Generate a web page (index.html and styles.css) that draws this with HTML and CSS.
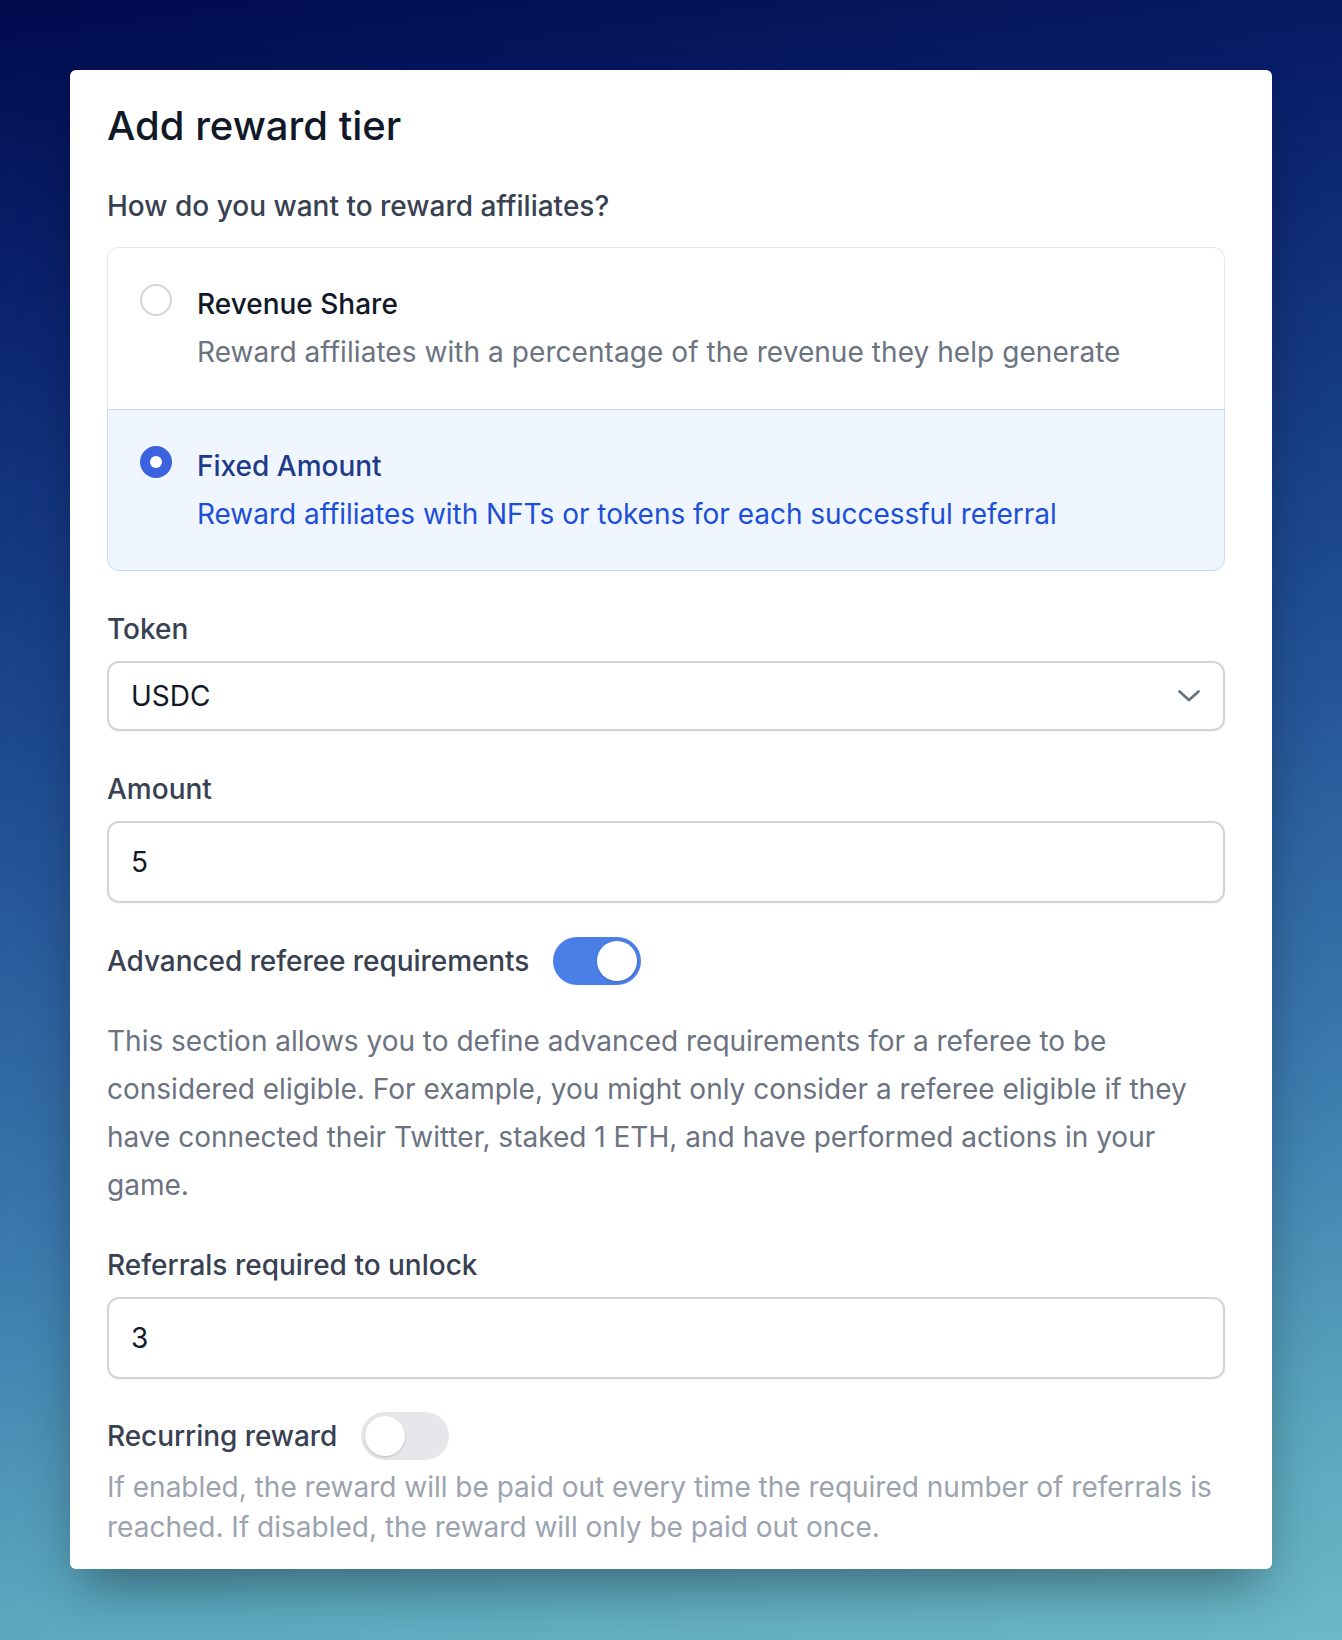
FILE: index.html
```html
<!DOCTYPE html>
<html lang="en">
<head>
<meta charset="utf-8">
<title>Add reward tier</title>
<link rel="stylesheet" href="styles.css">
</head>
<body>
  <div class="card">
    <h1 class="title">Add reward tier</h1>
    <p class="question">How do you want to reward affiliates?</p>

    <div class="radio-group">
      <label class="option option-first">
        <span class="radio"></span>
        <span class="option-text">
          <span class="option-title">Revenue Share</span>
          <span class="option-desc">Reward affiliates with a percentage of the revenue they help generate</span>
        </span>
      </label>
      <label class="option option-selected">
        <span class="radio radio-checked"><span class="radio-dot"></span></span>
        <span class="option-text">
          <span class="option-title">Fixed Amount</span>
          <span class="option-desc">Reward affiliates with NFTs or tokens for each successful referral</span>
        </span>
      </label>
    </div>

    <div class="field field-token">
      <div class="label">Token</div>
      <div class="select">
        <span class="value">USDC</span>
        <svg class="chevron" width="24" height="14" viewBox="0 0 24 14" aria-hidden="true">
          <polyline points="2.5,2.5 12,11 21.5,2.5" fill="none" stroke="#6b7280" stroke-width="2.8" stroke-linecap="round" stroke-linejoin="round"/>
        </svg>
      </div>
    </div>

    <div class="field">
      <div class="label">Amount</div>
      <div class="input"><span class="value">5</span></div>
    </div>

    <div class="toggle-row toggle-row-advanced">
      <span class="label-inline">Advanced referee requirements</span>
      <span class="toggle toggle-on"><span class="knob"></span></span>
    </div>

    <p class="paragraph">This section allows you to define advanced requirements for a referee to be considered eligible. For example, you might only consider a referee eligible if they have connected their Twitter, staked 1 ETH, and have performed actions in your game.</p>

    <div class="field field-referrals">
      <div class="label">Referrals required to unlock</div>
      <div class="input"><span class="value">3</span></div>
    </div>

    <div class="toggle-row toggle-row-recurring">
      <span class="label-inline">Recurring reward</span>
      <span class="toggle"><span class="knob"></span></span>
    </div>
    <p class="help">If enabled, the reward will be paid out every time the required number of referrals is reached. If disabled, the reward will only be paid out once.</p>
  </div>
</body>
</html>
```

FILE: styles.css
```css
html {
  background: linear-gradient(172deg, #010a4d 0%, #0b2572 18%, #1e4b92 42%, #3a78ad 68%, #5aa6bd 88%, #6cb8c6 100%);
  min-height: 100%;
}

body {
  margin: 0;
  padding: 70px;
  min-height: 1640px;
  box-sizing: border-box;
  font-family: Inter, "Noto Sans", "Liberation Sans", sans-serif;
  -webkit-font-smoothing: antialiased;
}

.card {
  background: #ffffff;
  border-radius: 6px;
  padding: 28px 47px 22px 37px;
  box-shadow: 0 25px 50px -12px rgba(0, 0, 0, 0.4);
}

.title {
  margin: 0 0 32px;
  font-size: 40px;
  line-height: 56px;
  font-weight: 500;
  color: #111827;
}

.question {
  margin: 0 0 21px;
  font-size: 28px;
  line-height: 40px;
  font-weight: 500;
  color: #374151;
}

.radio-group {
  display: flex;
  flex-direction: column;
}

.option {
  display: flex;
  align-items: flex-start;
  gap: 25px;
  padding: 36px 32px;
}

.option-first {
  border: 1px solid #e5e7eb;
  border-bottom: none;
  border-radius: 12px 12px 0 0;
  padding-bottom: 37px;
}

.option-selected {
  border: 1px solid #bfdbfe;
  border-radius: 0 0 12px 12px;
  background: #eff6ff;
}

.radio {
  flex: none;
  width: 32px;
  height: 32px;
  box-sizing: border-box;
  border-radius: 50%;
  border: 2px solid #d1d5db;
  background: #ffffff;
  display: flex;
  align-items: center;
  justify-content: center;
}

.radio-checked {
  border: none;
  background: #3b63e0;
}

.radio-dot {
  width: 12px;
  height: 12px;
  border-radius: 50%;
  background: #ffffff;
}

.option-text {
  display: flex;
  flex-direction: column;
  gap: 8px;
}

.option-title {
  font-size: 28px;
  line-height: 40px;
  font-weight: 500;
  color: #111827;
}

.option-desc {
  font-size: 28px;
  line-height: 40px;
  color: #6b7280;
}

.option-first .option-desc {
  letter-spacing: 0.06px;
}

.option-selected .option-title {
  color: #1e3a8a;
}

.option-selected .option-desc {
  color: #1d4ed8;
  letter-spacing: -0.03px;
}

.field {
  margin-top: 38px;
}

.field-referrals {
  margin-top: 36px;
}

.label {
  font-size: 28px;
  line-height: 40px;
  font-weight: 500;
  color: #374151;
  margin-bottom: 12px;
}

.select,
.input {
  display: flex;
  align-items: center;
  justify-content: space-between;
  box-sizing: border-box;
  border: 2px solid #d1d5db;
  border-radius: 12px;
  padding: 0 22px;
  background: #ffffff;
  box-shadow: 0 1px 2px rgba(0, 0, 0, 0.05);
  font-size: 28px;
  color: #111827;
}

.select {
  height: 70px;
}

.input {
  height: 82px;
}

.chevron {
  display: block;
}

.toggle-row {
  display: flex;
  align-items: center;
  gap: 24px;
  height: 48px;
}

.toggle-row-advanced {
  margin-top: 34px;
}

.toggle-row-recurring {
  margin-top: 33px;
}

.label-inline {
  font-size: 28px;
  line-height: 40px;
  font-weight: 500;
  color: #374151;
  letter-spacing: -0.06px;
}

.toggle {
  flex: none;
  position: relative;
  width: 88px;
  height: 48px;
  border-radius: 24px;
  background: #e5e7eb;
}

.toggle-on {
  background: #4b7fe8;
}

.knob {
  position: absolute;
  top: 4px;
  left: 4px;
  width: 40px;
  height: 40px;
  border-radius: 50%;
  background: #ffffff;
  box-shadow: 0 1px 3px rgba(0, 0, 0, 0.12), 0 1px 2px rgba(0, 0, 0, 0.08);
}

.toggle-on .knob {
  left: 44px;
}

.paragraph {
  margin: 32px 0 0;
  font-size: 28px;
  line-height: 48px;
  color: #6b7280;
}

.help {
  margin: 7px 0 0;
  font-size: 28px;
  line-height: 40px;
  color: #9ca3af;
}
```
